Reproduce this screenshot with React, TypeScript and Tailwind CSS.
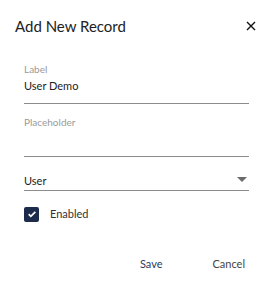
import { useState } from "react"

const Field = ({ label, value, className = "" }: { label: string; value: string; className?: string }) => (
  <div className={`flex flex-col border-b border-[#8c8c8c] ${className}`}>
    <span className="text-[10px] leading-[12px] text-[#9a9a9a]">{label}</span>
    <span className="mt-[3px] h-[16px] text-[11px] leading-[16px] text-[#222]">{value}</span>
  </div>
)

const App = () => {
  const [enabled, setEnabled] = useState(true)

  return (
    <div className="flex h-[285px] w-[273px] flex-col bg-white font-['Lato',sans-serif]">
      <div className="flex items-center justify-between pl-[15px] pr-[16px] pt-[16px]">
        <h2 className="text-[15px] leading-[20px] text-[#222]">Add New Record</h2>
        <button aria-label="Close" className="flex h-[12px] w-[12px] items-center justify-center text-[#111]">
          <svg viewBox="0 0 10 10" className="h-[10px] w-[10px]" stroke="currentColor" strokeWidth={1.4}>
            <path d="M1 1l8 8M9 1l-8 8" />
          </svg>
        </button>
      </div>

      <div className="flex flex-col px-6 pt-[27px]">
        <Field label="Label" value="User Demo" className="pb-[9px]" />
        <Field label="Placeholder" value="" className="mt-[12px] pb-[9px]" />

        <div className="mt-[16px] flex items-center justify-between border-b border-[#8c8c8c] pb-[1px]">
          <span className="text-[11px] leading-[16px] text-[#222]">User</span>
          <svg viewBox="0 0 10 5" className="mb-[3px] mr-[2px] h-[5px] w-[10px]" fill="#6b6b6b">
            <path d="M0 0h10L5 5z" />
          </svg>
        </div>

        <label className="mt-[15px] flex items-center gap-[11px]">
          <button
            onClick={() => setEnabled((v) => !v)}
            className={`flex h-[15px] w-[15px] items-center justify-center rounded-[2px] ${
              enabled ? "bg-[#1c2b4b]" : "border border-[#666] bg-white"
            }`}
          >
            {enabled && (
              <svg viewBox="0 0 12 12" className="h-[10px] w-[10px]" fill="none" stroke="white" strokeWidth={2}>
                <path d="M2 6.2l2.6 2.6L10 3.4" />
              </svg>
            )}
          </button>
          <span className="text-[11px] leading-[16px] text-[#333]">Enabled</span>
        </label>
      </div>

      <div className="mt-auto flex justify-end gap-[50px] pb-[14px] pr-[28px]">
        <button className="text-[11px] leading-[14px] text-[#2b3a63]">Save</button>
        <button className="text-[11px] leading-[14px] text-[#444]">Cancel</button>
      </div>
    </div>
  )
}

export default App
